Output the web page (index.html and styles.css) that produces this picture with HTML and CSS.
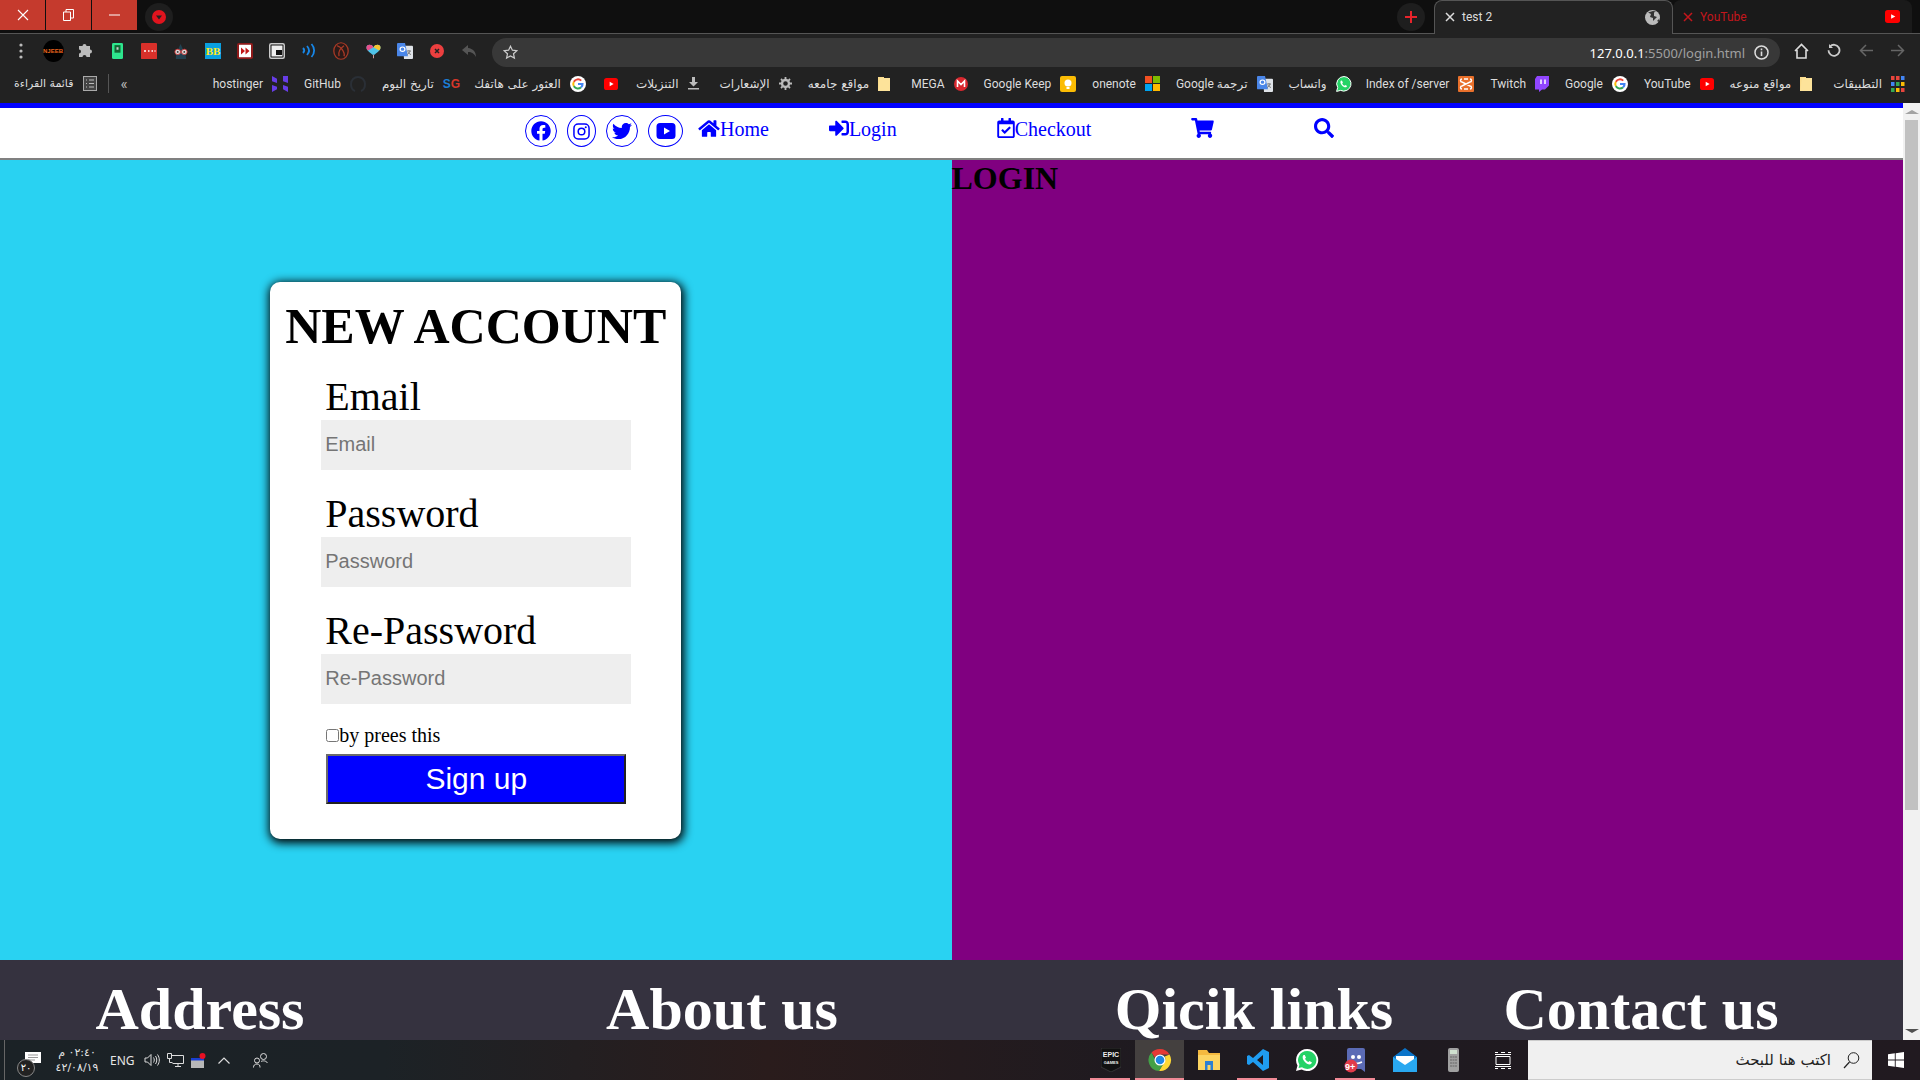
FILE: index.html
```html
<!DOCTYPE html>
<html lang="en">
<head>
  <meta charset="UTF-8">
  <meta name="viewport" content="width=device-width, initial-scale=1.0">
  <title>test 2</title>
  <link rel="stylesheet" href="styles.css">
</head>
<body>
  <svg class="defs" xmlns="http://www.w3.org/2000/svg">
    <symbol id="g-logo" viewBox="0 0 16 16">
      <circle cx="8" cy="8" r="8" fill="#fff"/>
      <path d="M8 4.200a3.800 3.800 0 0 1 2.600 1l1.300-1.300A5.700 5.700 0 0 0 3 5.200l1.600 1.200A3.800 3.800 0 0 1 8 4.200z" fill="#ea4335"/>
      <path d="M3 5.200a5.700 5.700 0 0 0 0 5.600l1.600-1.200a3.800 3.800 0 0 1 0-3.200z" fill="#fbbc05"/>
      <path d="M3 10.800a5.700 5.700 0 0 0 8.800 1.100l-1.600-1.200a3.800 3.800 0 0 1-5.600-1.100z" fill="#34a853"/>
      <path d="M13.600 7H8v2.100h3.300a2.900 2.900 0 0 1-1.100 1.600l1.600 1.200a5.700 5.700 0 0 0 1.800-4.900z" fill="#4285f4"/>
    </symbol>
    <symbol id="yt-logo" viewBox="0 0 16 14" preserveAspectRatio="none">
      <rect width="16" height="14" rx="3" fill="#f00"/>
      <path d="M6.500 4.500v5L11 7z" fill="#fff"/>
    </symbol>
    <symbol id="folder" viewBox="0 0 12 16" preserveAspectRatio="none">
      <path d="M0 0h6v1h6v15H0z" fill="#fbdc8c"/>
      <path d="M2 1h10v15H0z" fill="#fde69f" opacity=".7"/>
    </symbol>
    <symbol id="translate" viewBox="0 0 16 18" preserveAspectRatio="none">
      <path d="M6 3h9a1 1 0 0 1 1 1v13a1 1 0 0 1-1 1H7z" fill="#dfe3e8"/>
      <path d="M1 0h7l3 15H1a1 1 0 0 1-1-1V1a1 1 0 0 1 1-1z" fill="#4a86e8"/>
      <circle cx="5.500" cy="7" r="2.400" fill="none" stroke="#fff" stroke-width="1.200"/>
      <path d="M10 9h4M12 8v1M13 9c-.4 2-1.500 3-3 4M11 10c.5 1.300 1.500 2.300 3 3" stroke="#777" fill="none"/>
    </symbol>
  </svg>

  <header class="tabstrip">
    <div class="win-buttons">
      <div class="win-btn">
        <svg width="12" height="12" viewBox="0 0 12 12"><path d="M1 1l10 10M11 1L1 11" stroke="#fff" stroke-width="1.100"/></svg>
      </div>
      <div class="win-btn">
        <svg width="11" height="12" viewBox="0 0 11 12"><path d="M.5 3h7v8.500h-7zM3 3V.5h7.500V9H8" fill="none" stroke="#fff"/></svg>
      </div>
      <div class="win-btn">
        <svg width="11" height="2" viewBox="0 0 11 2"><path d="M0 1h11" stroke="#fff"/></svg>
      </div>
    </div>
    <div class="round-btn">
      <svg width="14" height="14" viewBox="0 0 14 14"><circle cx="7" cy="7" r="7" fill="#e0141e"/><path d="M4 5.500h6L7 9.500z" fill="#222"/></svg>
    </div>
    <div class="tab-space"></div>
    <div class="round-btn">
      <svg width="14" height="14" viewBox="0 0 14 14"><path d="M7 1v12M1 7h12" stroke="#e8232b" stroke-width="2"/></svg>
    </div>
    <div class="tab tab-active">
      <svg width="10" height="10" viewBox="0 0 10 10"><path d="M1 1l8 8M9 1L1 9" stroke="#ddd" stroke-width="1.500"/></svg>
      <span class="tab-title">test 2</span>
      <svg width="15" height="15" viewBox="0 0 15 15"><circle cx="7.500" cy="7.500" r="7.500" fill="#bbb"/><path d="M3 2.500l3 1.500-1 3 3 1v3l2-2 2-2-3-1V2.500l2-1-3-.5zM12 11l2-2v3z" fill="#333"/></svg>
    </div>
    <div class="tab tab-other">
      <svg width="10" height="10" viewBox="0 0 10 10"><path d="M1 1l8 8M9 1L1 9" stroke="#c4161c" stroke-width="1.500"/></svg>
      <span class="tab-title">YouTube</span>
      <svg width="15" height="13"><use href="#yt-logo"/></svg>
    </div>
  </header>

  <div class="toolbar">
    <div class="ext-icons">
      <svg width="4" height="16" viewBox="0 0 4 16"><g fill="#bbb"><circle cx="2" cy="2" r="1.600"/><circle cx="2" cy="8" r="1.600"/><circle cx="2" cy="14" r="1.600"/></g></svg>
      <div class="njeeb">NJEEB</div>
      <svg width="15" height="15" viewBox="0 0 15 15"><path d="M1 3h3.500a2 2 0 1 1 4 0H12v3.500a2 2 0 1 1 0 4V14H8.500a2 2 0 1 0-4 0H1v-3.500a2 2 0 1 0 0-4z" fill="#bbb"/></svg>
      <svg width="11" height="16" viewBox="0 0 11 19" preserveAspectRatio="none"><rect width="11" height="19" rx="1.500" fill="#2de58d"/><rect x="2.500" y="2.500" width="6" height="9" fill="#163"/><rect x="4.500" y="5" width="2" height="3" fill="#ccc"/></svg>
      <svg width="16" height="16" viewBox="0 0 16 19" preserveAspectRatio="none"><rect width="16" height="19" rx="1" fill="#d9302a"/><path d="M3 9.500h2M7 9.500h1.500M10.500 9.500h1.500M13.500 9.500h1" stroke="#fff" stroke-width="2"/></svg>
      <svg width="16" height="16" viewBox="0 0 17 18" preserveAspectRatio="none"><path d="M3 18c0-5 1-8 2-10l3-7 3 7c1 2 3 5 3 10z" fill="#22404f"/><circle cx="5" cy="10" r="3" fill="#ddd" stroke="#c33"/><circle cx="12" cy="10" r="3" fill="#ddd" stroke="#c33"/><circle cx="5" cy="10" r="1" fill="#333"/><circle cx="12" cy="10" r="1" fill="#333"/></svg>
      <div class="bb-icon">BB</div>
      <svg width="16" height="16" viewBox="0 0 16 18" preserveAspectRatio="none"><rect width="16" height="18" rx="2" fill="#8e1a1a"/><rect x="2" y="2" width="12" height="14" fill="#fff"/><path d="M4 5l4 4-4 4zM8.500 5l4 4-4 4z" fill="#c21818"/></svg>
      <svg width="16" height="16" viewBox="0 0 16 16"><rect x=".75" y=".75" width="14.500" height="14.500" rx="1.500" fill="#111" stroke="#ccc" stroke-width="1.500"/><rect x="2.500" y="2.500" width="11" height="11" fill="#eee"/><rect x="7" y="7" width="6" height="5" fill="#111"/></svg>
      <svg width="14" height="17" viewBox="0 0 14 17"><g fill="none" stroke="#1787e8" stroke-width="1.800"><path d="M1 6c1.500 1.500 1.500 3.500 0 5M5 4c2.500 2.800 2.500 6.200 0 9M9.500 2c3.500 3.800 3.500 9.200 0 13"/></g></svg>
      <svg width="16" height="18" viewBox="0 0 16 19" preserveAspectRatio="none"><ellipse cx="8" cy="9.500" rx="7.200" ry="8.700" fill="#2b1a18" stroke="#a83a26" stroke-width="1.300"/><path d="M4 4c6 2 8 9 7 11M11 4C7 7 5 11 6 15" fill="none" stroke="#a83a26" stroke-width="1.300"/></svg>
      <svg width="15" height="16" viewBox="0 0 15 19" preserveAspectRatio="none"><path d="M7.500 5C6 1 0 1 .5 6c.3 3 4 6 6 8h2c2-2 5.700-5 6-8C15 1 9 1 7.500 5z" fill="#4fc3e8"/><path d="M7.500 5C9 1 15 1 14.500 6c-.1 1-.6 2-1.400 3L7.500 5z" fill="#f4c430"/><path d="M.5 6C0 1 6 1 7.500 5L2 9C1 8 .6 7 .5 6z" fill="#e84f8c"/><path d="M7 14h1v4H7z" fill="#c99"/></svg>
      <svg width="16" height="16"><use href="#translate"/></svg>
      <svg width="14" height="14" viewBox="0 0 14 14"><circle cx="7" cy="7" r="7" fill="#ec3f3f"/><path d="M5 5l4 4M9 5L5 9" stroke="#222" stroke-width="1.500"/></svg>
      <svg width="16" height="14" viewBox="0 0 16 14"><path d="M7 1L1 6l6 5V8c4 0 6 1.500 8 5 0-5-3-8.500-8-9z" fill="#555"/></svg>
    </div>
    <div class="address-bar">
      <svg width="15" height="15" viewBox="0 0 15 15"><path d="M7.500 1.200l1.900 4 4.400.5-3.300 3 .9 4.400-3.900-2.200-3.900 2.200.9-4.400-3.300-3 4.400-.5z" fill="none" stroke="#ccc" stroke-width="1.200"/></svg>
      <span class="url"><b>127.0.0.1</b>:5500/login.html</span>
      <svg width="15" height="15" viewBox="0 0 15 15"><circle cx="7.500" cy="7.500" r="6.500" fill="none" stroke="#ddd" stroke-width="1.500"/><path d="M7.500 6.500v4.500M7.500 3.500v1.700" stroke="#ddd" stroke-width="1.600"/></svg>
    </div>
    <div class="nav-icons">
      <svg width="15" height="16" viewBox="0 0 15 16"><path d="M1 8l6.500-6.500L14 8M3 7v8h9V7" fill="none" stroke="#ddd" stroke-width="1.600"/></svg>
      <svg width="14" height="15" viewBox="0 0 14 15"><path d="M3 3.500a5.500 5.500 0 1 1-1.500 3.700" fill="none" stroke="#ccc" stroke-width="1.800"/><path d="M2 1v4h4z" fill="#ccc"/></svg>
      <svg width="14" height="13" viewBox="0 0 14 13"><path d="M14 6.500H2M7 1L1.500 6.500 7 12" fill="none" stroke="#666" stroke-width="1.500"/></svg>
      <svg width="14" height="13" viewBox="0 0 14 13"><path d="M0 6.500h12M7 1l5.500 5.500L7 12" fill="none" stroke="#666" stroke-width="1.500"/></svg>
    </div>
  </div>

  <div class="bookmarks">
    <div class="bm bm-first"><span class="ar">قائمة القراءة</span>
      <svg width="14" height="15" viewBox="0 0 14 15"><rect x=".5" y=".5" width="13" height="14" fill="#444" stroke="#aaa"/><path d="M3 4h1M6 4h5M3 7.500h1M6 7.500h5M3 11h1M6 11h5" stroke="#bbb" stroke-width="1.200"/></svg>
    </div>
    <div class="bm-sep"></div>
    <div class="bm-more">«</div>
    <div class="bm-list">
      <div class="bm">hostinger
        <svg width="16" height="16" viewBox="0 0 16 18" preserveAspectRatio="none"><path d="M0 0l5 3v5L0 6zM11 0l5 0v8l-5-2zM0 10l5 2h6v-2l5 2v6l-5-3v-3H5v3l-5 3z" fill="#673de6"/></svg>
      </div>
      <div class="bm">GitHub
        <svg width="16" height="16" viewBox="0 0 16 16"><path d="M5 15c-3-1-4-4-4-7a7 7 0 0 1 14 0c0 3-1 6-4 7" fill="none" stroke="#2a2f36" stroke-width="2"/></svg>
      </div>
      <div class="bm bm-tight"><span class="ar">تاريخ اليوم</span>
        <span class="sg"><i>S</i>G</span>
      </div>
      <div class="bm bm-loose-s"><span class="ar">العثور على هاتفك</span>
        <svg width="16" height="16"><use href="#g-logo"/></svg>
      </div>
      <div class="bm bm-loose-s">
        <svg width="14" height="12"><use href="#yt-logo"/></svg>
      </div>
      <div class="bm bm-loose"><span class="ar">التنزيلات</span>
        <svg width="11" height="13" viewBox="0 0 11 13"><path d="M4 0h3v5h3L5.500 9.500 1 5h3zM0 11h11v1.500H0z" fill="#bbb"/></svg>
      </div>
      <div class="bm"><span class="ar">الإشعارات</span>
        <svg width="13" height="13" viewBox="0 0 13 13"><circle cx="6.500" cy="6.500" r="3.500" fill="none" stroke="#bbb" stroke-width="2.400"/><path d="M6.500 0v13M0 6.500h13M2 2l9 9M11 2l-9 9" stroke="#bbb" stroke-width="1.800" stroke-dasharray="2.500 8 2.500"/></svg>
      </div>
      <div class="bm bm-loose"><span class="ar">مواقع جامعه</span>
        <svg width="12" height="14"><use href="#folder"/></svg>
      </div>
      <div class="bm">MEGA
        <svg width="14" height="14" viewBox="0 0 14 14"><circle cx="7" cy="7" r="7" fill="#d9272e"/><path d="M3.500 10V4l3.500 3.500L10.500 4v6" fill="none" stroke="#fff" stroke-width="1.600"/></svg>
      </div>
      <div class="bm">Google Keep
        <svg width="16" height="16" viewBox="0 0 16 16"><rect width="16" height="16" rx="2" fill="#fbbc04"/><circle cx="8" cy="7" r="3.500" fill="#fff"/><rect x="6.500" y="11" width="3" height="2" fill="#fff"/></svg>
      </div>
      <div class="bm">onenote
        <svg width="15" height="15" viewBox="0 0 15 15"><rect width="7" height="7" fill="#f25022"/><rect x="8" width="7" height="7" fill="#7fba00"/><rect y="8" width="7" height="7" fill="#00a4ef"/><rect x="8" y="8" width="7" height="7" fill="#ffb900"/></svg>
      </div>
      <div class="bm"><span class="bm-mixed" dir="rtl"><span class="ar">ترجمة</span> Google</span>
        <svg width="16" height="16"><use href="#translate"/></svg>
      </div>
      <div class="bm bm-tight"><span class="ar">واتساب</span>
        <svg width="16" height="16" viewBox="0 0 16 16"><path d="M8 .5a7.300 7.300 0 0 0-6.300 11L.6 15.400l4-1A7.300 7.300 0 1 0 8 .5z" fill="#25d366" stroke="#fff"/><path d="M5 4.500c-1 1-.8 2.800.8 4.700s3.500 2.600 4.700 1.800l.6-1-1.800-1-.8.700c-1-.4-1.800-1.200-2.300-2.300l.7-.8-.9-1.900z" fill="#fff"/></svg>
      </div>
      <div class="bm">Index of /server
        <svg width="16" height="16" viewBox="0 0 16 16"><rect width="16" height="16" rx="1" fill="#e9702b"/><path d="M4 3c-2 0-2 3 0 3l8 4c2 0 2 3 0 3M12 3c2 0 2 3 0 3l-8 4c-2 0-2 3 0 3M6 3h4M6 13h4" fill="none" stroke="#fff" stroke-width="1.400"/></svg>
      </div>
      <div class="bm">Twitch
        <svg width="14" height="16" viewBox="0 0 14 16"><path d="M2 0h12v9.500L10 13.500H7L4 16v-2.500H0V3z" fill="#9146ff"/><path d="M6 3.500v4.500M10 3.500v4.500" stroke="#fff" stroke-width="1.500"/></svg>
      </div>
      <div class="bm">Google
        <svg width="16" height="16"><use href="#g-logo"/></svg>
      </div>
      <div class="bm">YouTube
        <svg width="14" height="12"><use href="#yt-logo"/></svg>
      </div>
      <div class="bm bm-loose"><span class="ar">مواقع منوعه</span>
        <svg width="12" height="14"><use href="#folder"/></svg>
      </div>
      <div class="bm"><span class="ar">التطبيقات</span>
        <svg width="14" height="16" viewBox="0 0 14 16"><g><rect width="3.500" height="4" fill="#e8453c"/><rect x="5" width="3.500" height="4" fill="#e8453c"/><rect x="10" width="3.500" height="4" fill="#4285f4"/><rect y="6" width="3.500" height="4" fill="#4285f4"/><rect x="5" y="6" width="3.500" height="4" fill="#34a853"/><rect x="10" y="6" width="3.500" height="4" fill="#fbbc05"/><rect y="12" width="3.500" height="4" fill="#34a853"/><rect x="5" y="12" width="3.500" height="4" fill="#fbbc05"/><rect x="10" y="12" width="3.500" height="4" fill="#e8453c"/></g></svg>
      </div>
    </div>
  </div>

  <div class="browser-page">
    <div class="viewport">
      <nav class="site-nav">
        <a class="social social-fb">
          <svg width="20" height="20" viewBox="0 0 512 512"><path d="M504 256C504 119 393 8 256 8S8 119 8 256c0 123.780 90.690 226.380 209.250 245V327.690h-63V256h63v-54.640c0-62.150 37-96.480 93.670-96.480 27.140 0 55.520 4.840 55.520 4.840v61h-31.280c-30.800 0-40.410 19.120-40.410 38.730V256h68.780l-11 71.690h-57.780V501C413.310 482.380 504 379.780 504 256z"/></svg>
        </a>
        <a class="social social-ig">
          <svg width="17" height="17" viewBox="0 0 18 18"><rect x="1" y="1" width="16" height="16" rx="4.500" fill="none" stroke="#00f" stroke-width="1.600"/><circle cx="9" cy="9" r="3.500" fill="none" stroke="#00f" stroke-width="1.600"/><circle cx="13.500" cy="4.500" r="1.100"/></svg>
        </a>
        <a class="social social-tw">
          <svg width="20" height="20" viewBox="0 0 512 512"><path d="M459.370 151.716c.325 4.548.325 9.097.325 13.645 0 138.720-105.583 298.558-298.558 298.558-59.452 0-114.680-17.219-161.137-47.106 8.447.974 16.568 1.299 25.340 1.299 49.055 0 94.213-16.568 130.274-44.832-46.132-.975-84.792-31.188-98.112-72.772 6.498.974 12.995 1.624 19.818 1.624 9.421 0 18.843-1.300 27.614-3.573-48.081-9.747-84.143-51.980-84.143-102.985v-1.299c13.969 7.797 30.214 12.670 47.431 13.319-28.264-18.843-46.781-51.005-46.781-87.391 0-19.492 5.197-37.360 14.294-52.954 51.655 63.675 129.300 105.258 216.365 109.807-1.624-7.797-2.599-15.918-2.599-24.040 0-57.828 46.782-104.934 104.934-104.934 30.213 0 57.502 12.670 76.670 33.137 23.715-4.548 46.456-13.320 66.599-25.340-7.798 24.366-24.366 44.833-46.132 57.827 21.117-2.273 41.584-8.122 60.426-16.243-14.292 20.791-32.161 39.308-52.628 54.253z"/></svg>
        </a>
        <a class="social social-yt">
          <svg width="20" height="20" viewBox="0 0 20 20"><path fill-rule="evenodd" d="M4 2h12a3.500 3.500 0 0 1 3.500 3.500v9A3.500 3.500 0 0 1 16 18H4a3.500 3.500 0 0 1-3.500-3.500v-9A3.500 3.500 0 0 1 4 2zm4 4.500v7l6-3.500z"/></svg>
        </a>
        <a class="nav-link nav-home">
          <svg width="22" height="19" viewBox="0 0 576 512"><path d="M280.370 148.260L96 300.110V464a16 16 0 0 0 16 16l112.060-.29a16 16 0 0 0 15.920-16V368a16 16 0 0 1 16-16h64a16 16 0 0 1 16 16v95.640a16 16 0 0 0 16 16.050L464 480a16 16 0 0 0 16-16V300L295.670 148.260a12.190 12.190 0 0 0-15.300 0zM571.600 251.470L488 182.560V44.050a12 12 0 0 0-12-12h-56a12 12 0 0 0-12 12v72.610L318.470 43a48 48 0 0 0-61 0L4.340 251.470a12 12 0 0 0-1.600 16.900l25.500 31A12 12 0 0 0 45.150 301l235.220-193.740a12.190 12.190 0 0 1 15.300 0L530.900 301a12 12 0 0 0 16.900-1.600l25.500-31a12 12 0 0 0-1.700-16.930z"/></svg>Home
        </a>
        <a class="nav-link nav-login">
          <svg width="20" height="20" viewBox="0 0 512 512"><path d="M416 448h-84c-6.600 0-12-5.400-12-12v-40c0-6.600 5.400-12 12-12h84c17.700 0 32-14.300 32-32V160c0-17.700-14.300-32-32-32h-84c-6.600 0-12-5.400-12-12V76c0-6.600 5.400-12 12-12h84c53 0 96 43 96 96v192c0 53-43 96-96 96zm-47-201L201 79c-15-15-41-4.500-41 17v96H24c-13.300 0-24 10.700-24 24v96c0 13.300 10.700 24 24 24h136v96c0 21.500 26 32 41 17l168-168c9.300-9.400 9.300-24.600 0-34z"/></svg>Login
        </a>
        <a class="nav-link nav-far">
          <svg width="18" height="20" viewBox="0 0 448 512"><path d="M400 64h-48V12c0-6.627-5.373-12-12-12h-40c-6.627 0-12 5.373-12 12v52H160V12c0-6.627-5.373-12-12-12h-40c-6.627 0-12 5.373-12 12v52H48C21.490 64 0 85.490 0 112v352c0 26.510 21.490 48 48 48h352c26.510 0 48-21.490 48-48V112c0-26.510-21.490-48-48-48zm-6 400H54a6 6 0 0 1-6-6V160h352v298a6 6 0 0 1-6 6zm-52.849-200.650L198.842 404.519c-4.705 4.667-12.303 4.637-16.971-.068l-75.091-75.699c-4.667-4.705-4.637-12.303.068-16.971l22.719-22.536c4.705-4.667 12.303-4.637 16.970.069l44.104 44.461 111.072-110.181c4.705-4.667 12.303-4.637 16.971.068l22.536 22.718c4.667 4.705 4.636 12.303-.069 16.970z"/></svg>Checkout
        </a>
        <a class="nav-link nav-far">
          <svg width="23" height="20" viewBox="0 0 576 512"><path d="M528.120 301.319l47.273-208C578.806 78.301 567.391 64 551.990 64H159.208l-9.166-44.810C147.758 8.021 137.930 0 126.529 0H24C10.745 0 0 10.745 0 24v16c0 13.255 10.745 24 24 24h69.883l70.248 343.435C147.325 417.100 136 435.222 136 456c0 30.928 25.072 56 56 56s56-25.072 56-56c0-15.674-6.447-29.835-16.824-40h209.647C430.447 426.165 424 440.326 424 456c0 30.928 25.072 56 56 56s56-25.072 56-56c0-22.172-12.888-41.332-31.579-50.405l5.517-24.276c3.413-15.018-8.002-29.319-23.403-29.319H218.117l-6.545-32h293.145c11.206 0 20.920-7.754 23.403-18.681z"/></svg>
        </a>
        <a class="nav-link nav-far">
          <svg width="20" height="20" viewBox="0 0 512 512"><path d="M505 442.700L405.300 343c-4.500-4.500-10.600-7-17-7H372c27.600-35.300 44-79.700 44-128C416 93.100 322.900 0 208 0S0 93.100 0 208s93.100 208 208 208c48.300 0 92.700-16.400 128-44v16.300c0 6.400 2.500 12.500 7 17l99.700 99.700c9.400 9.400 24.600 9.400 33.900 0l28.300-28.300c9.400-9.400 9.400-24.600.1-34zM208 336c-70.700 0-128-57.200-128-128 0-70.700 57.200-128 128-128 70.700 0 128 57.200 128 128 0 70.700-57.200 128-128 128z"/></svg>
        </a>
      </nav>

      <main class="split">
        <section class="signup-side">
          <form class="signup-card">
            <h1 class="card-title">NEW ACCOUNT</h1>
            <label class="field-label">Email</label>
            <input class="field" type="text" placeholder="Email">
            <label class="field-label">Password</label>
            <input class="field" type="password" placeholder="Password">
            <label class="field-label">Re-Password</label>
            <input class="field" type="password" placeholder="Re-Password">
            <div class="agree"><input type="checkbox" class="agree-box">by prees this</div>
            <button type="button" class="signup-btn">Sign up</button>
          </form>
        </section>
        <section class="login-side">
          <h1 class="login-title">LOGIN</h1>
        </section>
      </main>

      <footer class="site-footer">
        <h1>Address</h1>
        <h1>About us</h1>
        <h1>Qicik links</h1>
        <h1>Contact us</h1>
      </footer>
    </div>
    <div class="scrollbar">
      <div class="arrow-up"></div>
      <div class="thumb"></div>
      <div class="arrow-down"></div>
    </div>
  </div>

  <div class="taskbar">
    <div class="tray">
      <div class="notif">
        <svg width="16" height="13" viewBox="0 0 16 13"><path d="M0 0h16v11H5l-2 2v-2H0z" fill="#fff"/><path d="M3 3h10M3 5.500h10M3 8h7" stroke="#999"/></svg>
        <span class="notif-count">٢٠</span>
      </div>
      <div class="clock">
        <div dir="rtl">٠٢:٤٠ م</div>
        <div dir="ltr">٤٢/٠٨/١٩</div>
      </div>
      <span class="lang">ENG</span>
      <svg class="tray-speaker" width="16" height="14" viewBox="0 0 16 14"><path d="M1 5h2.500L7 1.500v11L3.500 9H1zM9.500 4.500c1 1.500 1 3.500 0 5M11.500 3c1.700 2.500 1.700 5.500 0 8M13.500 1.500c2.400 3.500 2.400 7.500 0 11" fill="none" stroke="#ddd"/></svg>
      <svg class="tray-icon" width="17" height="14" viewBox="0 0 17 14"><path d="M5 2.500h11.500v8h-11M11 10.500v3M8 13.500h6M.5 .5h4v5h-4zM2.500 5.500v4M2.500 9.500h3" fill="none" stroke="#ddd"/></svg>
      <svg class="tray-icon" width="15" height="15" viewBox="0 0 15 15"><rect y="5" width="13" height="10" fill="#b8b8b8"/><rect y="5" width="13" height="2.500" fill="#1a3fd0"/><circle cx="11.500" cy="3" r="3" fill="#e81123"/></svg>
      <svg class="tray-chevron" width="12" height="7" viewBox="0 0 12 7"><path d="M.5 6.500L6 1l5.500 5.500" fill="none" stroke="#ddd" stroke-width="1.200"/></svg>
      <svg class="tray-people" width="15" height="15" viewBox="0 0 15 15"><circle cx="10.500" cy="3.500" r="3" fill="none" stroke="#ddd"/><circle cx="4" cy="7.500" r="2.500" fill="none" stroke="#ddd"/><path d="M.5 14.500c0-2 1-3.500 3.500-3.500s3 1.500 3 3.500M8 8.500c2-1 5-1 6.500 1.500" fill="none" stroke="#ddd"/></svg>
    </div>
    <div class="apps">
      <div class="app app-open">
        <svg width="20" height="24" viewBox="0 0 20 24"><path d="M0 0h20v19l-10 5-10-5z" fill="#111" stroke="#555" stroke-width=".5"/><text x="10" y="9" text-anchor="middle" font-family="Liberation Sans" font-weight="700" font-size="7" fill="#eee">EPIC</text><text x="10" y="16" text-anchor="middle" font-family="Liberation Sans" font-weight="700" font-size="4" fill="#eee">GAMES</text></svg>
      </div>
      <div class="app app-active app-open">
        <svg width="24" height="24" viewBox="0 0 24 24"><path d="M12 1a11 11 0 0 1 9.500 5.500H12a5.500 5.500 0 0 0-5 3.300L3.500 4.500A11 11 0 0 1 12 1z" fill="#e53935"/><path d="M21.500 6.500A11 11 0 0 1 11 23l5-8.500a5.500 5.500 0 0 0 .8-6z" fill="#fdd835"/><path d="M3.500 4.500A11 11 0 0 0 11 23l5-8a5.500 5.500 0 0 1-9-3.500z" fill="#43a047"/><circle cx="12" cy="12" r="5.500" fill="#fff"/><circle cx="12" cy="12" r="4.300" fill="#1e88e5"/></svg>
      </div>
      <div class="app">
        <svg width="22" height="20" viewBox="0 0 22 20"><path d="M0 0h9l2 3h11v17H0z" fill="#f4b93f"/><path d="M0 5h22v15H0z" fill="#fcd462"/><path d="M7 11h8v9H7z" fill="#2d7fd3"/><path d="M9.500 15h3v5h-3z" fill="#fcd462"/></svg>
      </div>
      <div class="app app-open">
        <svg width="24" height="24" viewBox="0 0 24 24"><path d="M17 1l6 3v16l-6 3-10-9-4 3-2-1V8l2-1 4 3zm0 6l-6 5 6 5z" fill="#1f9cf0"/></svg>
      </div>
      <div class="app">
        <svg width="24" height="24" viewBox="0 0 24 24"><path d="M12 1a11 11 0 0 0-9.500 16.500L1 23l5.700-1.500A11 11 0 1 0 12 1z" fill="#fff"/><path d="M12 3a9 9 0 0 0-7.600 13.700L3.600 20l3.400-.8A9 9 0 1 0 12 3z" fill="#25d366"/><path d="M8.500 7c-1.500 1.500-1 4 1 6.500s5 3.500 6.500 2.500l1-1.500-2.500-1.500-1 1c-1.500-.5-2.700-1.700-3.500-3.300l1-1-1.200-2.700z" fill="#fff"/></svg>
      </div>
      <div class="app app-open">
        <svg width="24" height="26" viewBox="0 0 24 26"><path d="M5 1h14a2 2 0 0 1 2 2v22l-4-3H5a2 2 0 0 1-2-2V3a2 2 0 0 1 2-2z" fill="#5b6bb5"/><circle cx="9" cy="10" r="2" fill="#fff"/><circle cx="15" cy="10" r="2" fill="#fff"/><path d="M6 15c4 2 8 2 12 0" stroke="#fff" fill="none" stroke-width="1.500"/><circle cx="7" cy="19" r="6.500" fill="#e23b4a"/></svg>
        <span class="app-badge">9+</span>
      </div>
      <div class="app">
        <svg width="24" height="24" viewBox="0 0 24 24"><path d="M12 0l12 9v15H0V9z" fill="#0a74c9"/><path d="M3 8h18v7l-9 5-9-5z" fill="#fff"/><path d="M0 9l12 8 12-8v15H0z" fill="#29a8f0"/></svg>
      </div>
      <div class="app">
        <svg width="11" height="24" viewBox="0 0 11 24"><rect width="11" height="24" rx="2" fill="#a0a0a0"/><rect x="2" y="2" width="7" height="4" fill="#cfe0cf"/><path d="M2 9h7M2 12h7M2 15h7M2 18h7" stroke="#666" stroke-dasharray="2 .5"/></svg>
      </div>
      <div class="app">
        <svg width="16" height="17" viewBox="0 0 16 17"><path d="M0 .5h3M6 .5h4M13 .5h3M0 16.500h3M6 16.500h4M13 16.500h3M1 4.500h14M1 12.500h14M1 4.500v8M15 4.500v8M0 2.500h16M0 14.500h16" stroke="#fff" fill="none"/></svg>
      </div>
    </div>
    <div class="search-box">
      <span class="ar search-text">اكتب هنا للبحث</span>
      <svg width="17" height="17" viewBox="0 0 17 17"><circle cx="10.500" cy="6" r="5.300" fill="none" stroke="#222"/><path d="M6.500 10L1 16" stroke="#222" stroke-width="1.200"/></svg>
    </div>
    <div class="start">
      <svg width="16" height="16" viewBox="0 0 16 16"><path d="M0 2.300L6.800 1.300V7.600H0zM7.700 1.200L16 0V7.600H7.700zM0 8.400H6.800V14.700L0 13.700zM7.700 8.400H16V16L7.700 14.800z" fill="#fff"/></svg>
    </div>
  </div>
</body>
</html>
```

FILE: styles.css
```css
* {
  box-sizing: border-box;
}
html, body {
  margin: 0;
  height: 100%;
  overflow: hidden;
}
body {
  display: flex;
  flex-direction: column;
  width: 1920px;
  height: 1080px;
  font-family: "Liberation Serif", serif;
  background: #222;
}
.defs {
  display: none;
}

/* browser chrome */
.tabstrip {
  height: 34px;
  display: flex;
  align-items: flex-start;
  background: #0f0f0f;
  border-bottom: 1px solid #555;
  font-family: Roboto, "DejaVu Sans", sans-serif;
  font-size: 12px;
}
.win-buttons {
  display: flex;
  gap: 1px;
  height: 30px;
}
.win-btn {
  width: 45px;
  height: 30px;
  background: #c53a2d;
  display: flex;
  align-items: center;
  justify-content: center;
}
.round-btn {
  width: 28px;
  height: 28px;
  margin: 3px 0 0 8px;
  border-radius: 50%;
  background: #1e1e1e;
  display: flex;
  align-items: center;
  justify-content: center;
}
.tab-space {
  flex: 1;
}
.tab {
  width: 239px;
  height: 33px;
  display: flex;
  align-items: center;
  padding: 0 12px 0 10px;
  gap: 7px;
}
.tab-active {
  margin-left: 9px;
  height: 34px;
  padding-bottom: 1px;
  background: #222;
  color: #ddd;
  border: 1px solid #555;
  border-bottom: 0;
  border-radius: 8px 8px 0 0;
}
.tab-other {
  margin-right: 8px;
  background: #1a1a1a;
  color: #c4161c;
  border-radius: 8px 8px 0 0;
}
.tab-title {
  flex: 1;
}
.toolbar {
  height: 33px;
  display: flex;
  align-items: center;
  background: #222;
}
.ext-icons {
  width: 492px;
  padding-left: 5px;
  display: grid;
  grid-auto-flow: column;
  grid-auto-columns: 32px;
  justify-content: start;
  justify-items: center;
  align-items: center;
}
.njeeb {
  width: 21px;
  height: 22px;
  border-radius: 50%;
  background: #000;
  color: #e8641c;
  font: bold 6px "Liberation Sans", sans-serif;
  display: flex;
  align-items: center;
  justify-content: center;
}
.bb-icon {
  width: 16px;
  height: 16px;
  background: #0aa0e0;
  color: #ffe81a;
  font: bold 11px "Liberation Serif", serif;
  display: flex;
  align-items: center;
  justify-content: center;
}
.address-bar {
  width: 1288px;
  height: 29px;
  margin-top: 4px;
  padding: 0 11px;
  background: #383838;
  border-radius: 15px;
  display: flex;
  align-items: center;
  font-family: "Noto Sans", sans-serif;
  font-size: 13px;
}
.url {
  margin-left: auto;
  margin-right: 9px;
  color: #a0a0a0;
}
.url b {
  font-weight: 400;
  color: #fff;
}
.nav-icons {
  flex: 1;
  padding: 0 15px 0 14px;
  display: flex;
  align-items: center;
  justify-content: space-between;
}
.bookmarks {
  height: 36px;
  display: flex;
  align-items: center;
  padding: 0 15px 3px 14px;
  background: #222;
  color: #ddd;
  font-family: Roboto, "DejaVu Sans", sans-serif;
  font-size: 12px;
}
.bm {
  display: flex;
  align-items: center;
  gap: 9px;
  white-space: nowrap;
}
.bm-first {
  gap: 10px;
}
.bm-first .ar {
  font-size: 11px;
}
.bm-loose {
  margin-right: 5px;
}
.bm-loose-s {
  margin-right: 2px;
}
.bm-tight {
  margin-right: -2px;
}
.bm-sep {
  width: 1px;
  height: 19px;
  margin-left: 11px;
  background: #555;
}
.bm-more {
  margin-left: 11px;
  font-size: 15px;
  color: #bbb;
}
.bm-list {
  flex: 1;
  display: flex;
  align-items: center;
  justify-content: flex-end;
  gap: 16px;
}
.ar {
  font-family: "DejaVu Sans", sans-serif;
  font-size: 12px;
}
.sg {
  font: bold 12px "Liberation Sans", sans-serif;
  color: #d8372a;
}
.sg i {
  font-style: normal;
  color: #1c7ed6;
}

/* the page itself */
.browser-page {
  height: 937px;
  display: flex;
}
.viewport {
  flex: 1;
  min-width: 0;
  overflow: hidden;
  display: flex;
  flex-direction: column;
}
.site-nav {
  height: 57px;
  flex-shrink: 0;
  display: flex;
  align-items: center;
  padding: 0 0 4px 525px;
  background: #fff;
  border-top: 5px solid #00f;
  border-bottom: 2px solid #808080;
}
.social {
  height: 32px;
  margin-right: 10px;
  border: 1px solid #00f;
  border-radius: 50%;
  display: flex;
  align-items: center;
  justify-content: center;
  fill: #00f;
}
.social-fb, .social-tw {
  width: 32px;
}
.social-ig {
  width: 29px;
}
.social-yt {
  width: 35px;
  margin-right: 0;
}
.nav-link {
  display: flex;
  align-items: flex-end;
  height: 22px;
  margin-top: -4px;
  font-size: 20px;
  line-height: 22px;
  color: #00f;
  fill: #00f;
}
.nav-home {
  margin-left: 15px;
}
.nav-login {
  margin-left: 60px;
}
.nav-far {
  margin-left: 100px;
}
.nav-link svg {
  margin-bottom: 2px;
}
.split {
  height: 800px;
  flex-shrink: 0;
  display: flex;
}
.signup-side {
  width: 50%;
  background: #29d2f2;
  display: flex;
  align-items: center;
  justify-content: center;
}
.login-side {
  width: 50%;
  background: #800080;
}
.login-title {
  margin: 0;
  font-size: 32px;
}
.signup-card {
  width: 411px;
  height: 557px;
  padding: 15px 50px 0 51px;
  background: #fff;
  border-radius: 10px;
  box-shadow: 1px 2px 10px 2px #000;
  display: flex;
  flex-direction: column;
  align-items: flex-start;
}
.card-title {
  margin: 0 -50px 19px -51px;
  width: 411px;
  text-align: center;
  font-size: 50px;
  white-space: nowrap;
}
.field-label {
  padding-left: 4px;
  font-size: 40px;
  line-height: 46px;
}
.field {
  width: 310px;
  height: 50px;
  margin-bottom: 21px;
  padding: 0 4px;
  border: 0;
  background: #eee;
  font-family: "Liberation Sans", sans-serif;
  font-size: 20px;
}
.field::placeholder {
  color: #757575;
}
.agree {
  display: flex;
  align-items: center;
  margin: -1px 0 0 5px;
  font-size: 20px;
  line-height: 23px;
}
.agree-box {
  width: 13px;
  height: 13px;
  margin: 0;
}
.signup-btn {
  width: 300px;
  height: 50px;
  margin: 7px 0 0 5px;
  background: #00f;
  color: #fff;
  border: 2px solid;
  border-color: #6b6b6b #222 #222 #6b6b6b;
  font-family: "Liberation Sans", sans-serif;
  font-size: 30px;
}
.site-footer {
  flex: 1;
  min-height: 0;
  display: grid;
  grid-template-columns: 400px 644px 420px 354px;
  padding-top: 15px;
  background: #35323f;
  color: #fff;
  text-align: center;
}
.site-footer h1 {
  margin: 0;
  font-size: 60px;
  white-space: nowrap;
}
.scrollbar {
  width: 17px;
  display: flex;
  flex-direction: column;
  align-items: center;
  background: #f1f1f1;
}
.arrow-up, .arrow-down {
  width: 0;
  height: 0;
  border-left: 7px solid transparent;
  border-right: 7px solid transparent;
}
.arrow-up {
  margin-top: 7px;
  border-bottom: 4px solid #a3a3a3;
}
.thumb {
  width: 13px;
  height: 690px;
  margin-top: 6px;
  background: #c1c1c1;
}
.arrow-down {
  margin-top: auto;
  margin-bottom: 7px;
  border-top: 4px solid #505050;
}

/* windows taskbar */
.taskbar {
  height: 40px;
  display: flex;
  align-items: center;
  background: linear-gradient(90deg, #1b2226 0, #1c2226 20%, #2a1c1c 40%, #1e1a20 60%, #211a20 100%);
  color: #e6e6e6;
  font-family: "DejaVu Sans", sans-serif;
  font-size: 12px;
}
.tray {
  width: 1086px;
  height: 100%;
  display: flex;
  align-items: center;
  padding-left: 4px;
}
.notif {
  position: relative;
  width: 40px;
  height: 40px;
  border-left: 1px solid #666;
  display: flex;
  justify-content: center;
  padding-top: 12px;
}
.notif svg {
  margin-left: 16px;
}
.notif-count {
  position: absolute;
  left: 12px;
  top: 19px;
  width: 18px;
  height: 18px;
  border: 1px solid #888;
  border-radius: 50%;
  background: #222;
  color: #fff;
  font-size: 10px;
  line-height: 16px;
  text-align: center;
}
.clock {
  width: 62px;
  margin-left: 2px;
  text-align: center;
  font-size: 11px;
  line-height: 15px;
}
.lang {
  margin-left: 2px;
  font-family: "Noto Sans", sans-serif;
  font-size: 12px;
}
.tray-speaker {
  margin-left: 9px;
}
.tray-icon {
  margin-left: 7px;
}
.tray-chevron {
  margin-left: 12px;
}
.tray-people {
  margin-left: 23px;
}
.apps {
  width: 442px;
  height: 100%;
  display: flex;
}
.app {
  position: relative;
  width: 49px;
  height: 100%;
  display: flex;
  align-items: center;
  justify-content: center;
}
.app-open::after {
  content: "";
  position: absolute;
  left: 4px;
  right: 5px;
  bottom: 0;
  height: 2px;
  background: #f08a96;
}
.app-active {
  background: #44403f;
}
.app-active::after {
  left: 0;
  right: 0;
}
.app-badge {
  position: absolute;
  left: 14px;
  top: 22px;
  color: #fff;
  font: bold 9px "Liberation Sans", sans-serif;
}
.search-box {
  width: 344px;
  height: 100%;
  display: flex;
  align-items: center;
  justify-content: flex-end;
  gap: 12px;
  padding-right: 12px;
  background: #f0f0f0;
  border-top: 1px solid #ccc;
  border-bottom: 1px solid #ccc;
}
.search-text {
  color: #222;
  font-size: 15px;
}
.start {
  flex: 1;
  display: flex;
  justify-content: center;
}
```
